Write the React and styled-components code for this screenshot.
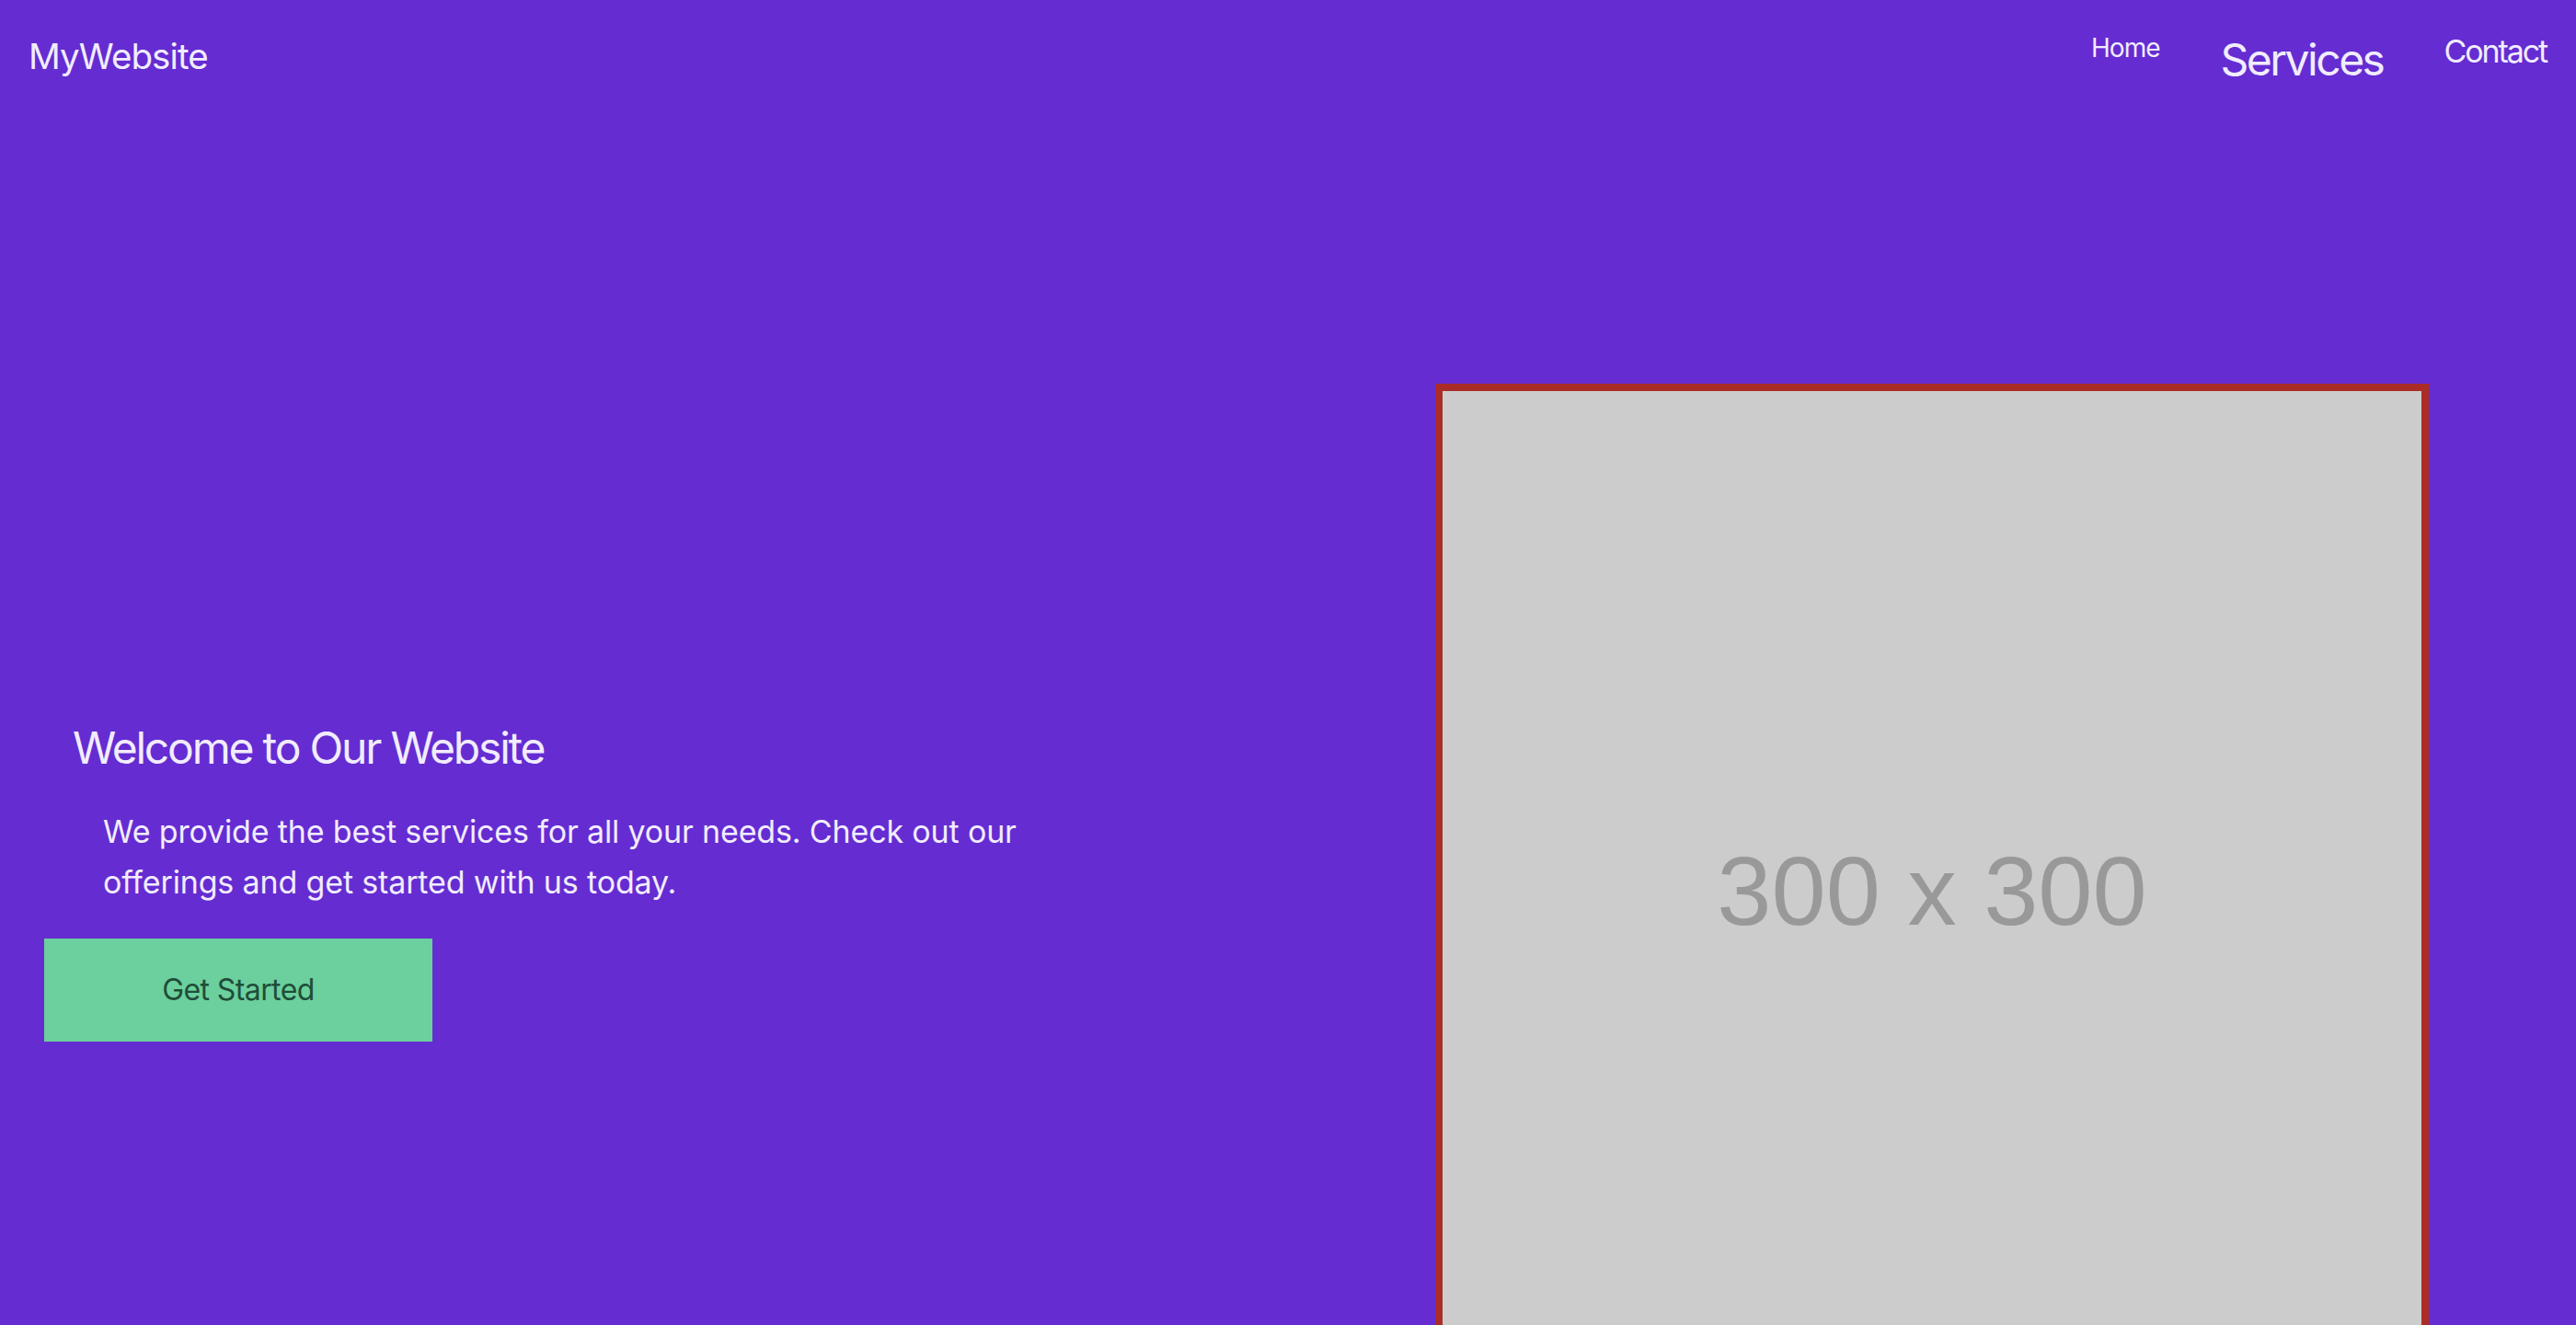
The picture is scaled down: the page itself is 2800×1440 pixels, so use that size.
import React from "react";
import styled, { createGlobalStyle } from "styled-components";

const GlobalStyle = createGlobalStyle`
  html, body {
    margin: 0;
    padding: 0;
    background: #652cd1;
  }
  body {
    font-family: Inter, "Noto Sans", "Liberation Sans", sans-serif;
    color: #f1ecff;
  }
  * { box-sizing: border-box; }
`;

const Page = styled.div`
  min-height: 100vh;
  background: #652cd1;
`;

const Header = styled.header`
  display: flex;
  justify-content: space-between;
  align-items: flex-start;
  padding: 35px 32px 35px 31px;
`;

const Logo = styled.div`
  font-size: 38.5px;
  line-height: normal;
  letter-spacing: -0.9px;
  padding-top: 3px;
  color: #f1ecff;
`;

const Nav = styled.nav`
  display: flex;
  align-items: flex-start;
  gap: 66px;
`;

const NavLink = styled.a`
  font-size: ${(p) => p.$size}px;
  letter-spacing: ${(p) => p.$track}px;
  line-height: normal;
  color: #f1ecff;
  text-decoration: none;
  cursor: pointer;
`;

const Hero = styled.section`
  display: grid;
  grid-template-columns: 1fr 1fr;
  align-items: center;
  padding: 288px 0;
`;

const TextColumn = styled.div`
  display: flex;
  flex-direction: column;
  align-items: flex-start;
  gap: 34px;
  padding-left: 48px;
`;

const Heading = styled.h1`
  margin: 0 0 0 31px;
  font-size: 48px;
  font-weight: 400;
  letter-spacing: -2.2px;
  line-height: normal;
  color: #f1ecff;
`;

const Lead = styled.p`
  margin: 0 0 0 64px;
  max-width: 1040px;
  font-size: 34px;
  letter-spacing: -0.15px;
  line-height: 55px;
  color: #f1ecff;
`;

const CTA = styled.button`
  width: 422px;
  height: 112px;
  border: none;
  border-radius: 0;
  background: #6bd09d;
  color: #1f4d38;
  font-family: Inter, "Noto Sans", "Liberation Sans", sans-serif;
  font-size: 32px;
  letter-spacing: -0.6px;
  cursor: pointer;
`;

const ImageColumn = styled.div`
  display: flex;
  justify-content: center;
`;

const Frame = styled.div`
  width: 1080px;
  height: 1080px;
  flex: none;
  border: 8px solid #a92d26;
  background: #cccccc;
  display: flex;
`;

const Placeholder = () => (
  <svg width="1064" height="1064" viewBox="0 0 300 300" aria-label="300 x 300">
    <rect width="300" height="300" fill="#cccccc" />
    <text
      x="150"
      y="163.6"
      textAnchor="middle"
      fontFamily="Liberation Sans, Arial, sans-serif"
      fontSize="30"
      fill="#999999"
    >
      300 x 300
    </text>
  </svg>
);

export default function App() {
  return (
    <>
      <GlobalStyle />
      <Page>
        <Header>
          <Logo>MyWebsite</Logo>
          <Nav>
            <NavLink $size={28} $track={-1}>Home</NavLink>
            <NavLink $size={48} $track={-2.5}>Services</NavLink>
            <NavLink $size={34} $track={-2.1}>Contact</NavLink>
          </Nav>
        </Header>
        <Hero>
          <TextColumn>
            <Heading>Welcome to Our Website</Heading>
            <Lead>
              We provide the best services for all your needs. Check out our
              offerings and get started with us today.
            </Lead>
            <CTA>Get Started</CTA>
          </TextColumn>
          <ImageColumn>
            <Frame>
              <Placeholder />
            </Frame>
          </ImageColumn>
        </Hero>
      </Page>
    </>
  );
}
